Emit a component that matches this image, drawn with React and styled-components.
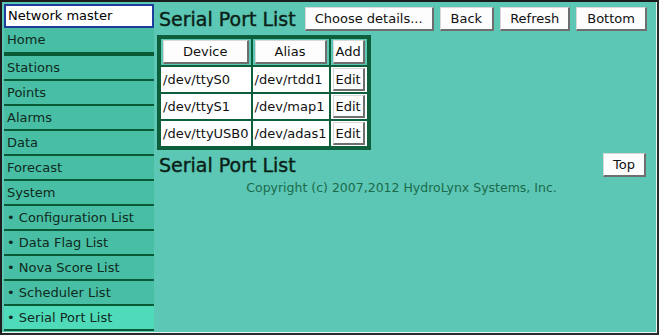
import React from "react";
import styled, { createGlobalStyle } from "styled-components";

const GlobalStyle = createGlobalStyle`
	html, body {
		margin: 0;
		padding: 0;
		background: #5cc7b4;
	}
	* {
		box-sizing: border-box;
	}
`;

const menu = [
	{ label: "Home", thick: true },
	{ label: "Stations" },
	{ label: "Points" },
	{ label: "Alarms" },
	{ label: "Data" },
	{ label: "Forecast" },
	{ label: "System" },
	{ label: "Configuration List", sub: true },
	{ label: "Data Flag List", sub: true },
	{ label: "Nova Score List", sub: true },
	{ label: "Scheduler List", sub: true },
	{ label: "Serial Port List", sub: true, active: true },
];

const ports = [
	{ device: "/dev/ttyS0", alias: "/dev/rtdd1" },
	{ device: "/dev/ttyS1", alias: "/dev/map1" },
	{ device: "/dev/ttyUSB0", alias: "/dev/adas1" },
];

const App = () => {
	return (
		<>
			<GlobalStyle />
			<Frame>
				<Sidebar>
					<NetworkBox>Network master</NetworkBox>
					{menu.map((item) => (
						<MenuItem
							key={item.label}
							$thick={item.thick}
							$active={item.active}
						>
							{item.sub ? `• ${item.label}` : item.label}
						</MenuItem>
					))}
				</Sidebar>
				<Main>
					<TitleRow>
						<Title>Serial Port List</Title>
						<Buttons>
							<Button>Choose details...</Button>
							<Button $wide>Back</Button>
							<Button>Refresh</Button>
							<Button $wide>Bottom</Button>
						</Buttons>
					</TitleRow>
					<Table>
						<thead>
							<tr>
								<HeadCell $w={86}>
									<Button $full>Device</Button>
								</HeadCell>
								<HeadCell $w={72}>
									<Button $full>Alias</Button>
								</HeadCell>
								<HeadCell $w={34}>
									<Button $full>Add</Button>
								</HeadCell>
							</tr>
						</thead>
						<tbody>
							{ports.map((p) => (
								<tr key={p.device}>
									<Cell>{p.device}</Cell>
									<Cell>{p.alias}</Cell>
									<Cell $center>
										<Button $small>Edit</Button>
									</Cell>
								</tr>
							))}
						</tbody>
					</Table>
					<TitleRow $bottom>
						<Title>Serial Port List</Title>
						<Button>Top</Button>
					</TitleRow>
					<Copyright>Copyright (c) 2007,2012 HydroLynx Systems, Inc.</Copyright>
				</Main>
			</Frame>
		</>
	);
};

export default App;

const Frame = styled.div`
	width: 659px;
	height: 335px;
	display: flex;
	background: #5cc7b4;
	border: 2px solid #1c1c1c;
	border-right-color: #2a2a2a;
	border-bottom-color: #2a2a2a;
	box-shadow: inset -1px -1px 0 #e8f4f0;
	font-family: "DejaVu Sans", Verdana, sans-serif;
	font-size: 13px;
	color: #0f2a20;
	overflow: hidden;
`;

const Sidebar = styled.nav`
	width: 154px;
	flex-shrink: 0;
	padding: 2px 2px 0 2px;
	display: flex;
	flex-direction: column;
`;

const NetworkBox = styled.div`
	height: 24px;
	background: #ffffff;
	border: 2px solid #1f3c9a;
	padding-left: 2px;
	line-height: 20px;
	color: #000;
`;

const MenuItem = styled.div`
	height: ${(p) => (p.$thick ? 28 : 25)}px;
	background: ${(p) => (p.$active ? "#4fdab9" : "#48bea4")};
	border-bottom: ${(p) => (p.$thick ? 4 : 2)}px solid #0b5a37;
	padding-left: 3px;
	line-height: 23px;
	white-space: nowrap;
`;

const Main = styled.main`
	flex: 1;
	min-width: 0;
	padding: 4px 11px 0 1px;
	display: flex;
	flex-direction: column;
`;

const TitleRow = styled.div`
	display: flex;
	align-items: center;
	justify-content: ${(p) => (p.$bottom ? "space-between" : "flex-start")};
	height: 25px;
	margin-top: ${(p) => (p.$bottom ? 2 : 0)}px;
	margin-bottom: ${(p) => (p.$bottom ? 0 : 4)}px;
	padding-left: 2px;
`;

const Title = styled.h2`
	margin: 0;
	flex-shrink: 0;
	white-space: nowrap;
	font-size: 19px;
	font-weight: normal;
	-webkit-text-stroke: 0.4px #0a1f18;
	color: #0a1f18;
	line-height: 22px;
`;

const Buttons = styled.div`
	display: flex;
	gap: 6px;
	margin-left: 9px;
	flex-shrink: 0;
`;

const Button = styled.button`
	font-family: "DejaVu Sans", Verdana, sans-serif;
	font-size: 13px;
	color: #111;
	background: #fdfdfd;
	height: ${(p) => (p.$small ? 23 : 24)}px;
	width: ${(p) => (p.$full ? "100%" : "auto")};
	padding: 0
		${(p) => (p.$small ? 2 : p.$full ? 0 : p.$wide ? 10 : 9)}px;
	border: 1px solid #d8d8d8;
	border-right: 2px solid #6e6e6e;
	border-bottom: 2px solid #6e6e6e;
	border-radius: 0;
	cursor: pointer;
	display: block;
	flex-shrink: 0;
	white-space: nowrap;
`;

const Table = styled.table`
	border-collapse: separate;
	border-spacing: 2px;
	border: 2px solid #0d5f3b;
	background: #0d5f3b;
	align-self: flex-start;
`;

const HeadCell = styled.th`
	width: ${(p) => p.$w}px;
	height: 25px;
	padding: 1px 2px;
	background: #5cc7b4;
	font-weight: normal;
`;

const Cell = styled.td`
	height: 25px;
	padding: 0 2px;
	background: #ffffff;
	white-space: nowrap;
	color: #111;
	text-align: ${(p) => (p.$center ? "center" : "left")};
	& > button {
		margin: 0 auto;
	}
`;

const Copyright = styled.div`
	margin-top: 3px;
	text-align: center;
	font-size: 12.5px;
	color: #1b6a4c;
`;
